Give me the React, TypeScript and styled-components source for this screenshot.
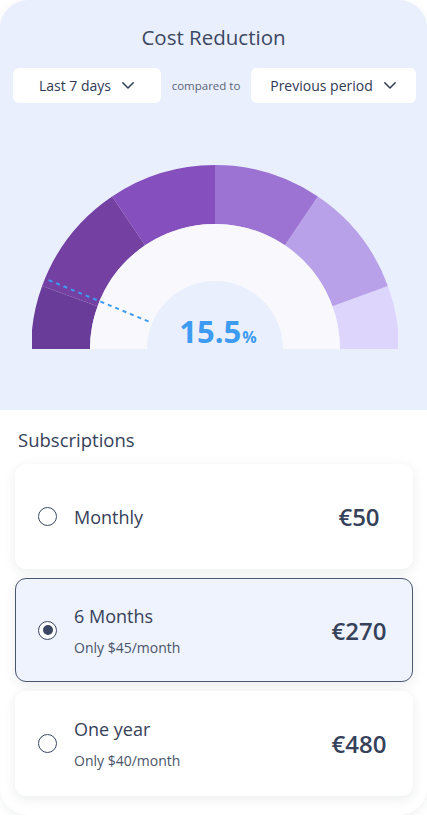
import React from "react";
import styled, { createGlobalStyle } from "styled-components";

const Global = createGlobalStyle`
  html, body { margin: 0; padding: 0; background: #ffffff; }
  body { font-family: "Open Sans", "Noto Sans", sans-serif; }
  * { box-sizing: border-box; }
`;

const Frame = styled.div`
  width: 427px;
  height: 815px;
  border-radius: 28px;
  overflow: hidden;
  background: #ffffff;
  box-shadow: 0 3px 10px rgba(40, 50, 80, 0.07);
  display: flex;
  flex-direction: column;
`;

const Top = styled.section`
  background: #e9effc;
  height: 410px;
  padding-top: 23px;
  display: flex;
  flex-direction: column;
  align-items: center;
`;

const Title = styled.h1`
  margin: 0;
  font-size: 20.5px;
  font-weight: 400;
  line-height: 28px;
  color: #3b4763;
`;

const Controls = styled.div`
  margin-top: 17px;
  width: 100%;
  padding: 0 11px 0 13px;
  display: flex;
  align-items: center;
  justify-content: space-between;
`;

const Select = styled.button<{ $w: number }>`
  width: ${(p) => p.$w}px;
  height: 35px;
  border: none;
  border-radius: 6px;
  background: #ffffff;
  display: flex;
  align-items: center;
  justify-content: center;
  gap: 10px;
  font-family: inherit;
  font-size: 14px;
  font-weight: 500;
  color: #2f3a55;
  padding: 0;
`;

const Compared = styled.span`
  font-size: 11.5px;
  color: #5b6478;
`;

const GaugeWrap = styled.div`
  position: relative;
  margin-top: 62px;
  margin-left: 3px;
  width: 366px;
  height: 184px;
`;

const Value = styled.div`
  position: absolute;
  left: 0;
  right: 0;
  bottom: -5px;
  text-align: center;
  color: #3d9bf2;
  font-weight: 700;
  font-size: 31px;
  line-height: 34px;
  padding-left: 6px;
`;

const Pct = styled.span`
  font-size: 16px;
  font-weight: 700;
  margin-left: 1px;
`;

const Bottom = styled.section`
  flex: 1;
  padding: 17px 14px 0 15px;
  display: flex;
  flex-direction: column;
`;

const SubTitle = styled.h2`
  margin: 0 0 12px 3px;
  font-size: 18.5px;
  font-weight: 400;
  line-height: 25px;
  color: #36415a;
`;

const List = styled.div`
  display: flex;
  flex-direction: column;
  gap: 9px;
`;

const Card = styled.label<{ $active?: boolean }>`
  height: ${(p) => (p.$active ? 104 : 105)}px;
  border-radius: 11px;
  background: ${(p) => (p.$active ? "#eef3fe" : "#ffffff")};
  border: 1px solid ${(p) => (p.$active ? "#4b5670" : "transparent")};
  box-shadow: 0 3px 12px rgba(30, 40, 60, 0.09);
  display: flex;
  align-items: center;
  padding: 0 0 0 22px;
`;

const Radio = styled.span<{ $on?: boolean }>`
  width: 19px;
  height: 19px;
  border-radius: 50%;
  border: 1.5px solid #3b4763;
  background: #ffffff;
  display: flex;
  align-items: center;
  justify-content: center;
  flex-shrink: 0;
  &::after {
    content: "";
    width: 10px;
    height: 10px;
    border-radius: 50%;
    background: ${(p) => (p.$on ? "#3b4763" : "transparent")};
  }
`;

const Info = styled.div`
  margin-left: 17px;
  flex: 1;
  display: flex;
  flex-direction: column;
  gap: 11px;
`;

const Name = styled.span`
  font-size: 18px;
  font-weight: 500;
  line-height: 24px;
  color: #36415a;
`;

const Note = styled.span`
  font-size: 14px;
  line-height: 18px;
  color: #4a5469;
`;

const Price = styled.span`
  width: 92px;
  margin-right: 7px;
  text-align: center;
  font-size: 24px;
  font-weight: 600;
  color: #36415a;
`;

const Chevron = () => (
  <svg width="14" height="9" viewBox="0 0 14 9" fill="none">
    <path d="M1.8 1.8 L7 7 L12.2 1.8" stroke="#2f3a55" strokeWidth="1.5" strokeLinecap="round" strokeLinejoin="round" />
  </svg>
);

const CX = 183;
const CY = 184;
const RO = 184;
const RI = 125;

const pt = (r: number, a: number) => {
  const rad = (a * Math.PI) / 180;
  return [CX + r * Math.cos(rad), CY - r * Math.sin(rad)];
};

const seg = (a1: number, a2: number) => {
  const [x1, y1] = pt(RO, a1);
  const [x2, y2] = pt(RO, a2);
  const [x3, y3] = pt(RI, a2);
  const [x4, y4] = pt(RI, a1);
  return `M${x1} ${y1} A${RO} ${RO} 0 0 0 ${x2} ${y2} L${x3} ${y3} A${RI} ${RI} 0 0 1 ${x4} ${y4} Z`;
};

const segments: [number, number, string][] = [
  [0, 20, "#ddd5fc"],
  [20, 56, "#b9a1e9"],
  [56, 90, "#9c72d2"],
  [90, 124, "#8550bd"],
  [124, 160, "#7441a3"],
  [160, 180, "#683c98"],
];

const Gauge = () => {
  const [lx1, ly1] = pt(180, 157.5);
  const [lx2, ly2] = pt(70, 157.5);
  return (
    <svg width="366" height="184" viewBox="0 0 366 184">
      {segments.map(([a, b, c]) => (
        <path key={a} d={seg(a, b)} fill={c} />
      ))}
      <path d={`M${CX - RI} ${CY} A${RI} ${RI} 0 0 1 ${CX + RI} ${CY} Z`} fill="#f8f8fd" />
      <path d={`M${CX - 68} ${CY} A68 68 0 0 1 ${CX + 68} ${CY} Z`} fill="#e9effc" />
      <line x1={lx1} y1={ly1} x2={lx2} y2={ly2} stroke="#3d9bf2" strokeWidth="2" strokeDasharray="4 4" />
    </svg>
  );
};

const plans = [
  { name: "Monthly", note: "", price: "€50", on: false },
  { name: "6 Months", note: "Only $45/month", price: "€270", on: true },
  { name: "One year", note: "Only $40/month", price: "€480", on: false },
];

export default function App() {
  return (
    <>
      <Global />
      <Frame>
        <Top>
          <Title>Cost Reduction</Title>
          <Controls>
            <Select $w={148}>
              Last 7 days <Chevron />
            </Select>
            <Compared>compared to</Compared>
            <Select $w={165}>
              Previous period <Chevron />
            </Select>
          </Controls>
          <GaugeWrap>
            <Gauge />
            <Value>
              15.5<Pct>%</Pct>
            </Value>
          </GaugeWrap>
        </Top>
        <Bottom>
          <SubTitle>Subscriptions</SubTitle>
          <List>
            {plans.map((p) => (
              <Card key={p.name} $active={p.on}>
                <Radio $on={p.on} />
                <Info>
                  <Name>{p.name}</Name>
                  {p.note && <Note>{p.note}</Note>}
                </Info>
                <Price>{p.price}</Price>
              </Card>
            ))}
          </List>
        </Bottom>
      </Frame>
    </>
  );
}
